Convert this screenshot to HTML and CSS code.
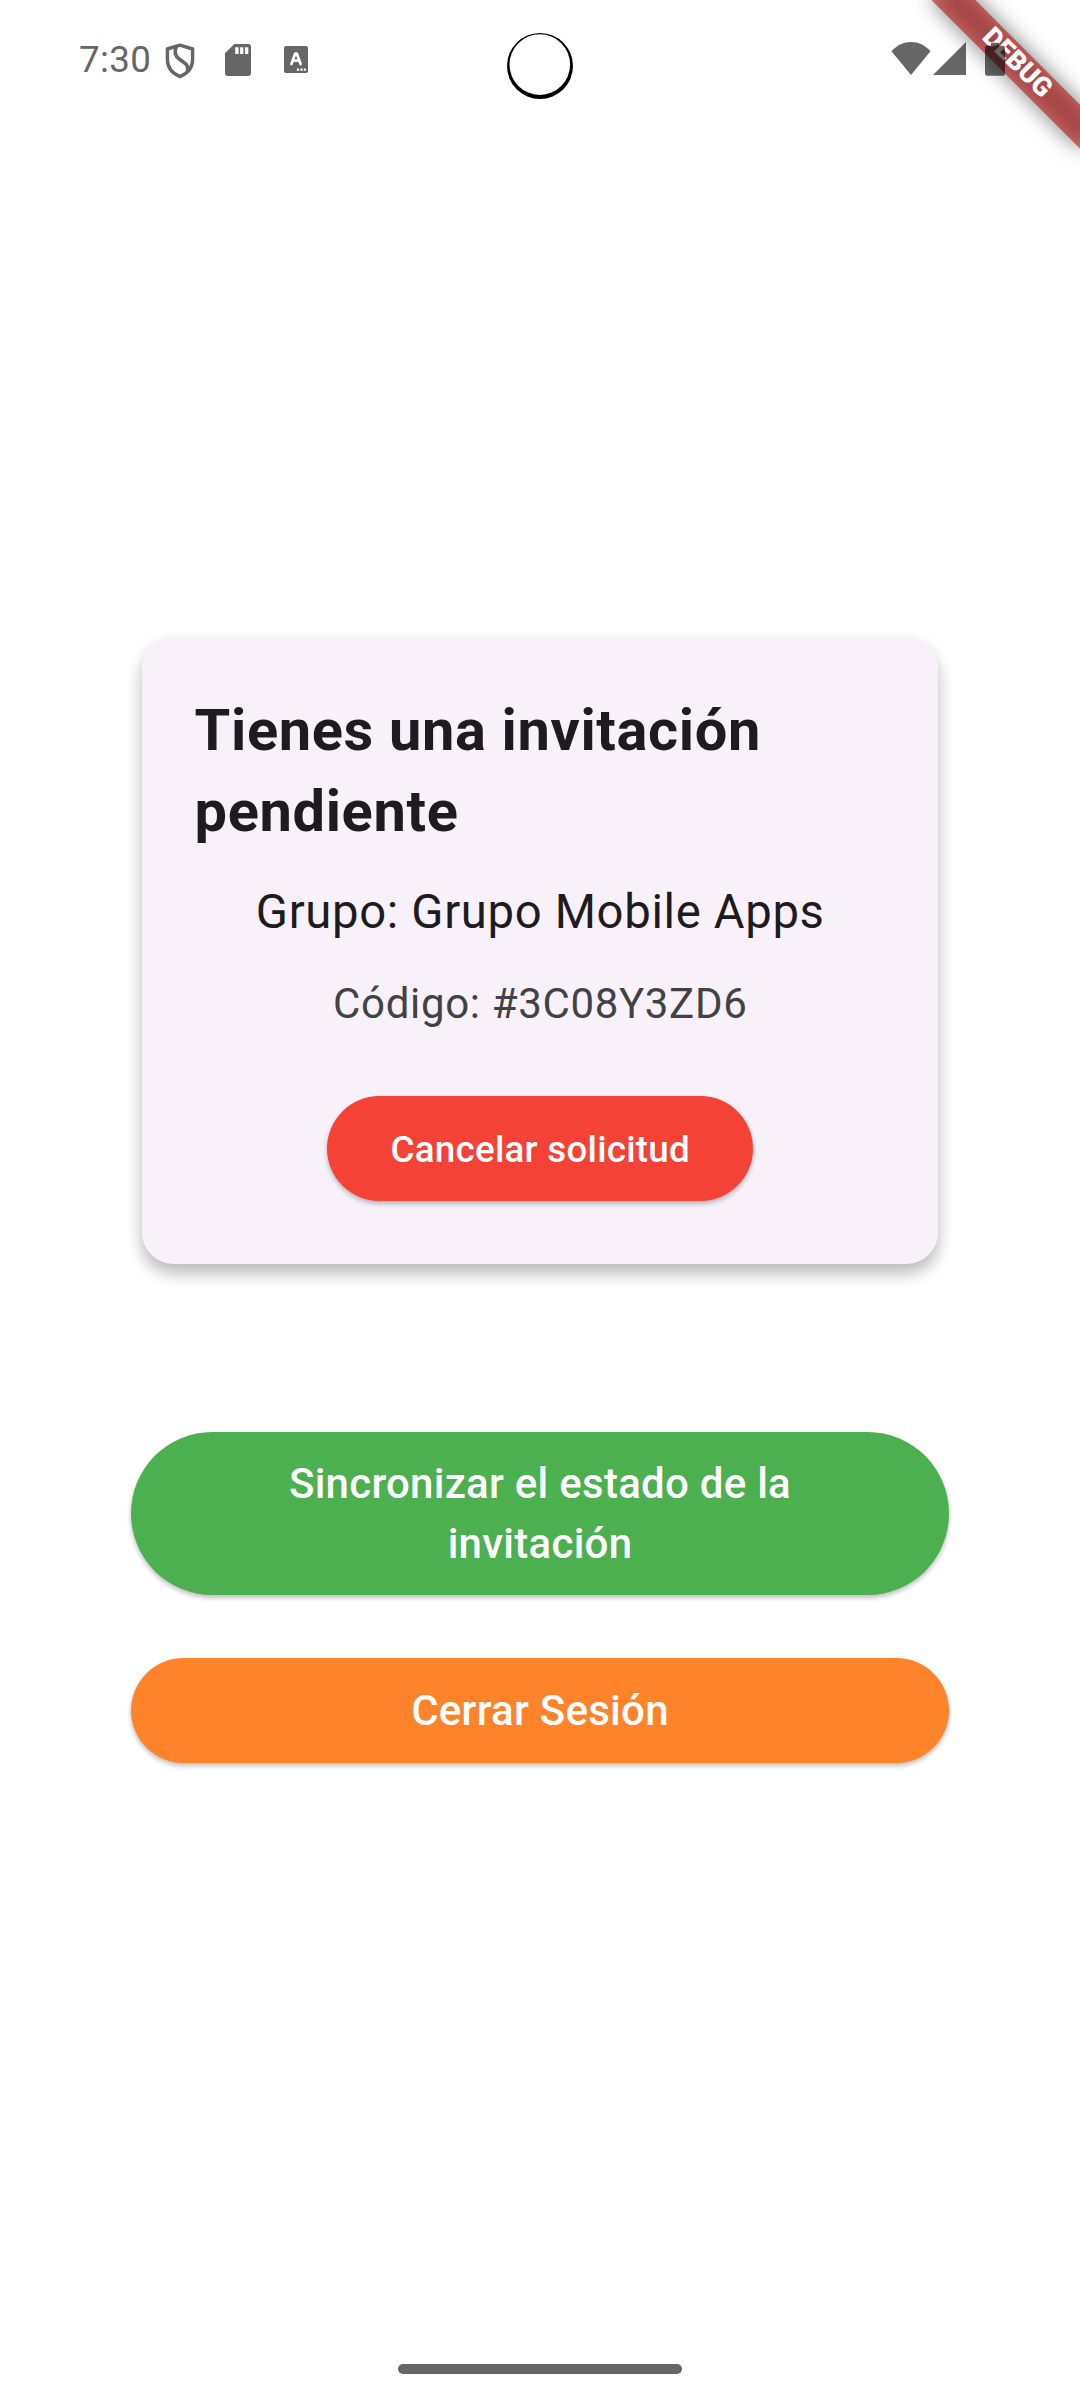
FILE: index.html
```html
<!DOCTYPE html>
<html lang="es">
<head>
<meta charset="utf-8">
<title>Invitación pendiente</title>
<link rel="stylesheet" href="styles.css">
</head>
<body>
<div class="screen">
  <div class="debug-corner">
    <div class="debug-shadow"></div>
    <div class="debug-banner">DEBUG</div>
  </div>

  <header class="status-bar">
    <span class="clock">7:30</span>
    <svg class="icon-shield" width="32" height="38" viewBox="0 0 32 38">
      <path d="M16 3.200 28.600 7V17.500C28.600 25.500 24 31.200 16 34.600 8 31.200 3.400 25.500 3.400 17.500V7Z" fill="none" stroke="#666" stroke-width="3.400" stroke-linejoin="round"/>
      <path d="M12.500 4.500C9.800 10 11 14 15.500 17.300 20.500 21 25 22.500 23.500 29.500" fill="none" stroke="#666" stroke-width="3.600"/>
    </svg>
    <svg class="icon-sd" width="26" height="32" viewBox="0 0 26 32">
      <path fill="#666" fill-rule="evenodd" d="M9.300 0H23a3 3 0 0 1 3 3V29a3 3 0 0 1-3 3H3a3 3 0 0 1-3-3V9.300ZM10.200 3.200V10H13.600V3.200ZM15.100 3.200V10H18.400V3.200ZM20 3.200V10H23.300V3.200Z"/>
    </svg>
    <svg class="icon-letter" width="24" height="27" viewBox="0 0 24 27">
      <rect width="24" height="27" rx="2" fill="#666"/>
      <path d="M7.400 18 11.200 7.500H12.800L16.600 18M9 14.600H15" fill="none" stroke="#fff" stroke-width="2.700" stroke-linecap="round" stroke-linejoin="round"/>
      <path d="M12.800 22.500H15V24.700H12.800ZM16.300 22.500H18.500V24.700H16.300ZM19.800 22.500H22V24.700H19.800Z" fill="#fff"/>
    </svg>
    <svg class="icon-camera" width="68" height="68" viewBox="0 0 68 68">
      <circle cx="34" cy="34" r="33" fill="#000"/>
      <circle cx="33.800" cy="32.600" r="30.300" fill="#fff"/>
    </svg>
    <svg class="icon-wifi" width="40" height="34" viewBox="0 0 40 34">
      <path fill="#000" fill-opacity=".6" d="M.5 9.300C11.500-3 28.500-3 39.500 9.300L20 33Z"/>
    </svg>
    <svg class="icon-signal" width="34" height="34" viewBox="0 0 34 34">
      <path fill="#000" fill-opacity=".6" d="M33 0V33H0Z"/>
    </svg>
    <svg class="icon-battery" width="20" height="34" viewBox="0 0 20 34">
      <path fill="#000" fill-opacity=".6" d="M6.500.7H13.500a.5.500 0 0 1 .5.500V3.700H18a2 2 0 0 1 2 2V31.800a2 2 0 0 1-2 2H2a2 2 0 0 1-2-2V5.700A2 2 0 0 1 2 3.700H6V1.200A.5.500 0 0 1 6.500.7Z"/>
    </svg>
  </header>

  <main class="content">
    <section class="card">
      <h1 class="card-title">Tienes una invitación pendiente</h1>
      <p class="group">Grupo: Grupo Mobile Apps</p>
      <p class="code">Código: #3C08Y3ZD6</p>
      <button class="button cancel">Cancelar solicitud</button>
    </section>
    <button class="button wide sync">Sincronizar el estado de la invitación</button>
    <button class="button wide logout">Cerrar Sesión</button>
  </main>

  <div class="home-handle"></div>
</div>
</body>
</html>
```
FILE: styles.css
```css
* { box-sizing: border-box; }

body {
  margin: 0;
  background: #fff;
  font-family: Roboto, sans-serif;
}

.screen {
  position: relative;
  display: flex;
  flex-direction: column;
  width: 1080px;
  height: 2400px;
  overflow: hidden;
  background: #fff;
}

/* Status bar: sits above the debug ribbon */
.status-bar {
  position: relative;
  z-index: 2;
  display: flex;
  align-items: flex-start;
  height: 136px;
  padding-left: 79px;
}

.status-bar svg { flex: none; }

.clock {
  width: 85px;
  margin-top: 38px;
  font-size: 36.75px;
  line-height: 43px;
  letter-spacing: .35px;
  color: #666;
}

.icon-shield { margin-top: 42px; }
.icon-sd { margin: 44px 0 0 29px; }
.icon-letter { margin: 46px 0 0 33px; }
.icon-camera { margin: 32px 0 0 198px; }
.icon-wifi { margin: 42px 0 0 317px; }
.icon-signal { margin: 42px 0 0 2px; }
.icon-battery { margin: 42px 0 0 18px; }

/* Debug ribbon across the top right corner */
.debug-corner {
  position: absolute;
  z-index: 1;
  top: 0;
  left: 1080px;
  width: 0;
  height: 0;
  transform: rotate(45deg);
  transform-origin: 0 0;
}

.debug-shadow,
.debug-banner {
  position: absolute;
  top: 73.5px;
  left: -105px;
  width: 210px;
  height: 31.5px;
}

.debug-shadow {
  background: rgba(0, 0, 0, .5);
  filter: blur(10.4px);
}

.debug-banner {
  background: rgba(183, 28, 28, .627);
  color: #fff;
  font-size: 26.8px;
  font-weight: 900;
  line-height: 28px;
  text-align: center;
}

.content {
  display: flex;
  flex: 1;
  flex-direction: column;
  align-items: center;
  padding-top: 501px;
}

.card {
  display: flex;
  flex-direction: column;
  align-items: center;
  width: 796px;
  height: 627px;
  margin-bottom: 168px;
  padding: 53px 52px 0 52.5px;
  border-radius: 31.5px;
  background: #f8f1f9;
  box-shadow: 0 10px 16px rgba(0, 0, 0, .2), 0 7px 18px rgba(0, 0, 0, .09);
}

.card-title,
.group,
.code {
  margin: 0;
  letter-spacing: .656px;
}

.card-title {
  color: #1d1b20;
  font-size: 57.75px;
  font-weight: 700;
  line-height: 81px;
}

.group {
  margin-top: 26px;
  color: #1d1b20;
  font-size: 47.25px;
  line-height: 68px;
}

.code {
  margin-top: 28px;
  color: #424242;
  font-size: 42px;
  line-height: 60px;
}

.button {
  border: 0;
  color: #fff;
  font-family: inherit;
  font-weight: 500;
  letter-spacing: .2625px;
  text-align: center;
  box-shadow: 0 3px 5px rgba(0, 0, 0, .2), 0 2px 5px rgba(0, 0, 0, .08);
}

.cancel {
  width: 426px;
  height: 105px;
  margin-top: 62px;
  padding: 1px 0 0;
  border-radius: 52.5px;
  background: #f44336;
  font-size: 36.75px;
}

.wide {
  width: 818px;
  padding: 0 105px;
  font-size: 42px;
  line-height: 60px;
}

.sync {
  height: 163px;
  margin-bottom: 63px;
  border-radius: 81.5px;
  background: #4caf50;
}

.logout {
  height: 105px;
  border-radius: 52.5px;
  background: #ff832b;
}

.home-handle {
  width: 284px;
  height: 10px;
  margin: 0 auto 26px;
  border-radius: 5px;
  background: #666;
}
```
